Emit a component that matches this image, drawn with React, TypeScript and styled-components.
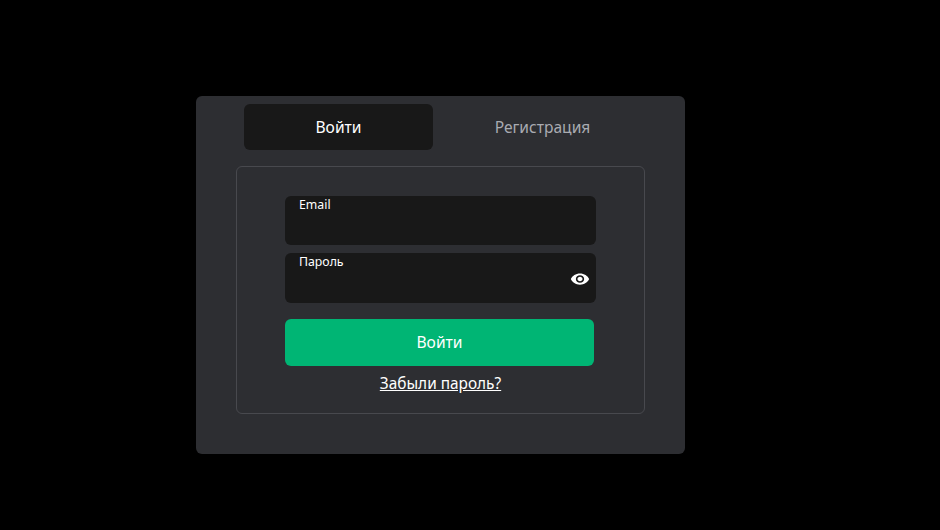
import React from 'react'
import styled, { createGlobalStyle } from 'styled-components'
import { MdVisibility } from 'react-icons/md'

const GlobalStyle = createGlobalStyle`
  html, body {
    margin: 0;
    padding: 0;
    background: #000;
  }
  * {
    box-sizing: border-box;
  }
`

const Page = styled.div`
  width: 100%;
  height: 530px;
  padding: 96px 0 0 196px;
  overflow: hidden;
  background: #000;
  font-family: 'Noto Sans', 'Open Sans', sans-serif;
`

const Card = styled.div`
  width: 489px;
  height: 358px;
  padding: 8px 40px 0;
  background: #2d2e32;
  border-radius: 6px;
`

const Tabs = styled.div`
  display: flex;
  gap: 15px;
  padding-left: 8px;
  margin-bottom: 16px;
`

const Tab = styled.button<{ $active?: boolean }>`
  width: 189px;
  height: 46px;
  padding: 0 0 1px;
  border: 0;
  border-radius: 6px;
  font-family: inherit;
  font-size: 15.6px;
  color: ${(p) => (p.$active ? '#fff' : '#a9abb1')};
  background: ${(p) => (p.$active ? '#181818' : 'transparent')};
`

const FormBox = styled.form`
  height: 248px;
  padding: 29px 48px 0;
  border: 1px solid #48494e;
  border-radius: 6px;
`

const Field = styled.div<{ $height: number }>`
  position: relative;
  width: 311px;
  height: ${(p) => p.$height}px;
  margin-bottom: 8px;
`

const FieldLabel = styled.label`
  position: absolute;
  top: 1px;
  left: 14px;
  font-size: 12.3px;
  line-height: 16px;
  color: #fff;
`

const Input = styled.input`
  width: 100%;
  height: 100%;
  padding: 16px 14px 0;
  border: 0;
  outline: 0;
  border-radius: 6px;
  background: #181818;
  color: #fff;
  font-family: inherit;
`

const EyeIcon = styled(MdVisibility)`
  position: absolute;
  top: 17px;
  right: 6px;
  width: 20px;
  height: 18px;
  color: #fff;
`

const Submit = styled.button`
  display: block;
  width: 309px;
  height: 47px;
  margin-top: 16px;
  padding: 0 0 2px;
  border: 0;
  border-radius: 6px;
  background: #00b574;
  color: #fff;
  font-family: inherit;
  font-size: 15.6px;
`

const Forgot = styled.a`
  display: block;
  width: 311px;
  margin-top: 8px;
  text-align: center;
  font-size: 15.4px;
  line-height: 20px;
  color: #fff;
  text-decoration: underline;
`

export default function App() {
  return (
    <Page>
      <GlobalStyle />
      <Card>
        <Tabs>
          <Tab $active>Войти</Tab>
          <Tab>Регистрация</Tab>
        </Tabs>
        <FormBox>
          <Field $height={49}>
            <FieldLabel htmlFor="email">Email</FieldLabel>
            <Input id="email" type="email" />
          </Field>
          <Field $height={50}>
            <FieldLabel htmlFor="password">Пароль</FieldLabel>
            <Input id="password" type="password" />
            <EyeIcon preserveAspectRatio="none" />
          </Field>
          <Submit type="button">Войти</Submit>
          <Forgot href="#">Забыли пароль?</Forgot>
        </FormBox>
      </Card>
    </Page>
  )
}
